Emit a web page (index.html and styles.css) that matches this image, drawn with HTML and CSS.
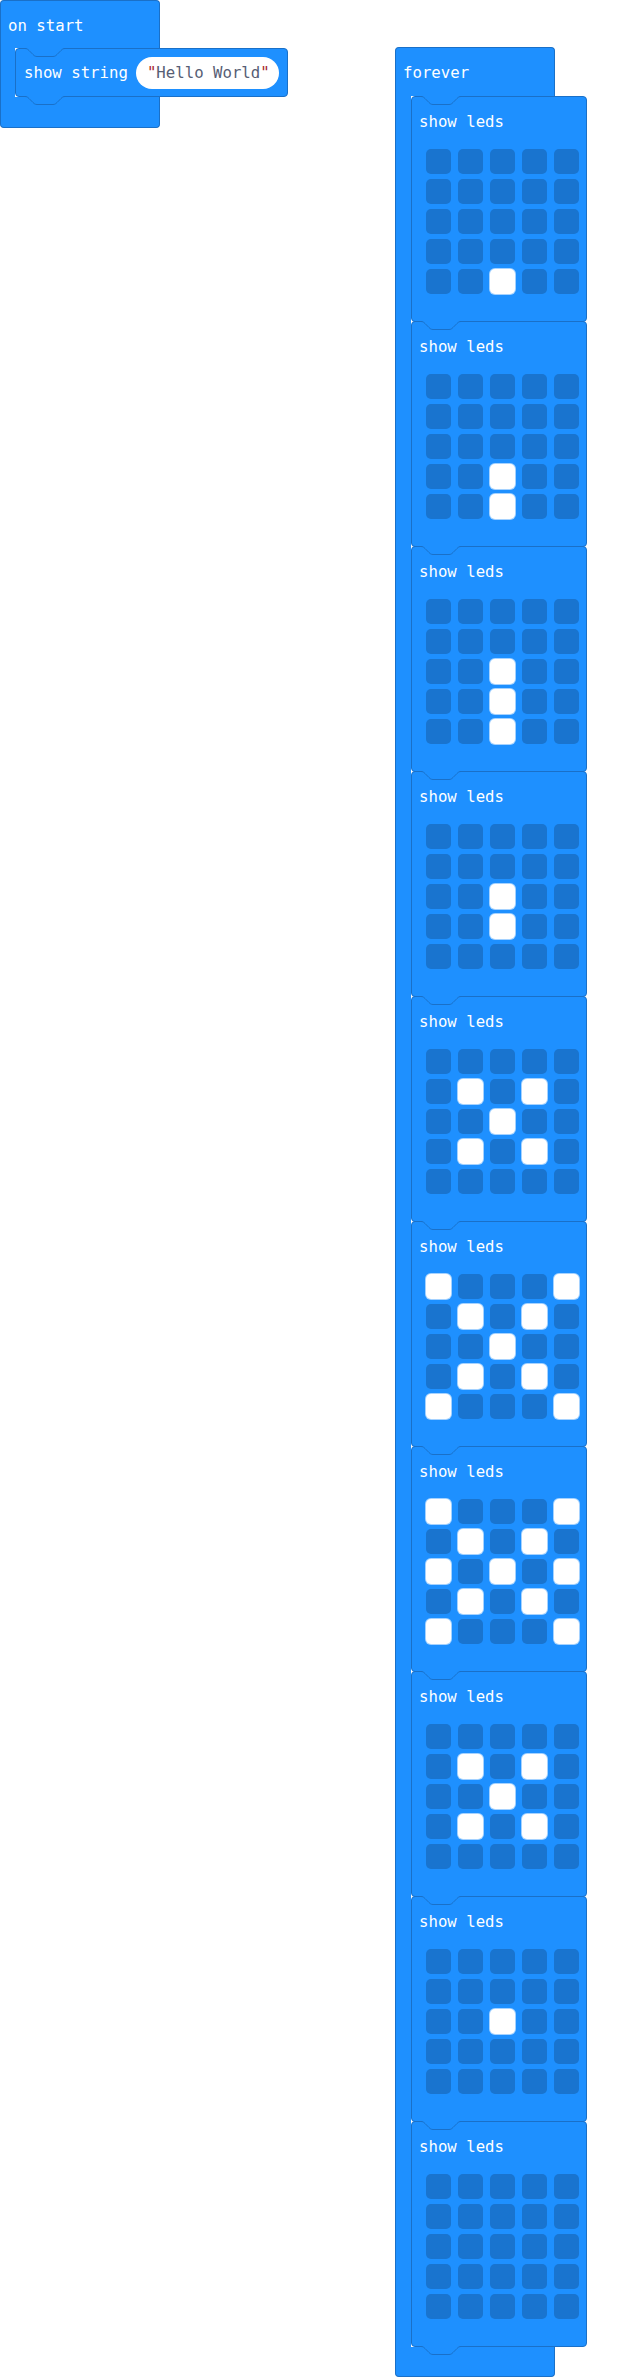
FILE: index.html
```html
<!DOCTYPE html>
<html lang="en">
<head>
	<meta charset="UTF-8">
	<title>Blocks</title>
	<link rel="stylesheet" href="styles.css">
</head>
<body>
	<div class="workspace">

		<!-- on start -->
		<div class="hat on-start">
			<div class="hat-head"><span class="label">on start</span></div>
			<div class="hat-body">
				<div class="hat-arm"></div>
				<div class="stack">
					<div class="stmt show-string">
						<svg class="notch" width="44" height="10"><path class="fill" d="M2 0 C4 0.5 5 1.5 6 2.5 L10 6.5 C11 7.5 12 8.5 14 8.5 H30 C32 8.5 33 7.5 34 6.5 L38 2.5 C39 1.5 40 0.5 42 0 Z"/><path class="line" d="M0 0.5 H2 C4 0.5 5 1.5 6 2.5 L10 6.5 C11 7.5 12 8.5 14 8.5 H30 C32 8.5 33 7.5 34 6.5 L38 2.5 C39 1.5 40 0.5 42 0.5 H44"/></svg>
						<span class="label">show string</span>
						<span class="pill"><span class="quote">"</span>Hello World<span class="quote">"</span></span>
						<svg class="notch tab" width="44" height="10"><path class="fill" d="M2 0 C4 0.5 5 1.5 6 2.5 L10 6.5 C11 7.5 12 8.5 14 8.5 H30 C32 8.5 33 7.5 34 6.5 L38 2.5 C39 1.5 40 0.5 42 0 Z"/><path class="line" d="M0 0.5 H2 C4 0.5 5 1.5 6 2.5 L10 6.5 C11 7.5 12 8.5 14 8.5 H30 C32 8.5 33 7.5 34 6.5 L38 2.5 C39 1.5 40 0.5 42 0.5 H44"/></svg>
					</div>
				</div>
			</div>
			<div class="hat-foot"></div>
		</div>

		<!-- forever -->
		<div class="hat forever">
			<div class="hat-head"><span class="label">forever</span></div>
			<div class="hat-body">
				<div class="hat-arm"></div>
				<div class="stack" id="foreverStack"></div>
			</div>
			<div class="hat-foot"></div>
		</div>

	</div>

	<script>
		// each frame: 5 rows of 5 leds, # = on
		const frames = [
			[".....", ".....", ".....", ".....", "..#.."],
			[".....", ".....", ".....", "..#..", "..#.."],
			[".....", ".....", "..#..", "..#..", "..#.."],
			[".....", ".....", "..#..", "..#..", "....."],
			[".....", ".#.#.", "..#..", ".#.#.", "....."],
			["#...#", ".#.#.", "..#..", ".#.#.", "#...#"],
			["#...#", ".#.#.", "#.#.#", ".#.#.", "#...#"],
			[".....", ".#.#.", "..#..", ".#.#.", "....."],
			[".....", ".....", "..#..", ".....", "....."],
			[".....", ".....", ".....", ".....", "....."]
		];

		const notchSvg = document.querySelector(".show-string .notch").outerHTML;
		const stack = document.getElementById("foreverStack");

		frames.forEach((rows, i) => {
			const block = document.createElement("div");
			block.className = "stmt show-leds";
			let html = notchSvg + '<span class="label">show leds</span><div class="leds">';
			rows.forEach(row => {
				for (const c of row) {
					html += c === "#" ? '<i class="on"></i>' : '<i></i>';
				}
			});
			html += "</div>";
			if (i === frames.length - 1) {
				html += notchSvg.replace('class="notch"', 'class="notch tab"');
			}
			block.innerHTML = html;
			stack.appendChild(block);
		});
	</script>
</body>
</html>
```

FILE: styles.css
```css
* {
	box-sizing: border-box;
}
body {
	margin: 0;
	background: #fff;
	font-family: "DejaVu Sans Mono", "Liberation Mono", monospace;
}
.workspace {
	position: relative;
	width: 639px;
	height: 2378px;
}

/* hat blocks sit on the free canvas */
.hat {
	position: absolute;
	display: flex;
	flex-direction: column;
	align-items: flex-start;
}
.on-start {
	left: 0;
	top: 0;
}
.forever {
	left: 395px;
	top: 47px;
}

.label {
	color: #fff;
	font-size: 15.7px;
	line-height: 20px;
	white-space: pre;
}

.hat-head {
	width: 160px;
	height: 49px;
	padding: 15px 7px 0;
	background: #1e90ff;
	border: 1px solid #1a70c8;
	border-bottom: none;
	border-radius: 4px 4px 0 0;
}
.on-start .hat-head {
	height: 48px;
}
.hat-body {
	display: flex;
}
.hat-arm {
	width: 16px;
	background: #1e90ff;
	border-left: 1px solid #1a70c8;
}
.on-start .hat-arm {
	width: 15px;
}
.hat-foot {
	width: 160px;
	height: 30px;
	background: #1e90ff;
	border: 1px solid #1a70c8;
	border-top: none;
	border-radius: 0 0 4px 4px;
}
.on-start .hat-foot {
	height: 31px;
}

.stack {
	display: flex;
	flex-direction: column;
}
.stmt {
	position: relative;
	background: #1e90ff;
	border: 1px solid #1a70c8;
	border-radius: 4px;
}
.stmt + .stmt {
	margin-top: -1px;
}

.notch {
	position: absolute;
	top: -1px;
	left: 7px;
	z-index: 1;
	overflow: visible;
}
.notch.tab {
	top: 100%;
}
.notch .fill {
	fill: #1e90ff;
}
.notch .line {
	fill: none;
	stroke: #1a70c8;
	stroke-width: 1;
}

/* show string */
.show-string {
	display: flex;
	align-items: center;
	gap: 8px;
	width: 273px;
	height: 49px;
	padding: 0 8px 0 8px;
}
.pill {
	height: 32px;
	padding: 0 9px 0 11px;
	border-radius: 16px;
	background: #fff;
	color: #575e75;
	font-size: 15.7px;
	line-height: 32px;
	white-space: pre;
}
.quote {
	color: #a8262e;
}

/* show leds */
.show-leds {
	width: 176px;
	height: 226px;
	padding: 15px 7px 0;
}
.leds {
	display: grid;
	grid-template-columns: repeat(5, 25px);
	grid-auto-rows: 25px;
	column-gap: 7px;
	row-gap: 5px;
	margin: 17px 0 0 7px;
}
.leds i {
	display: block;
	border-radius: 5px;
	background: #1974cf;
}
.leds i.on {
	background: #fff;
	box-shadow: 0 0 0 1px rgba(255, 255, 255, 0.6);
}
```
